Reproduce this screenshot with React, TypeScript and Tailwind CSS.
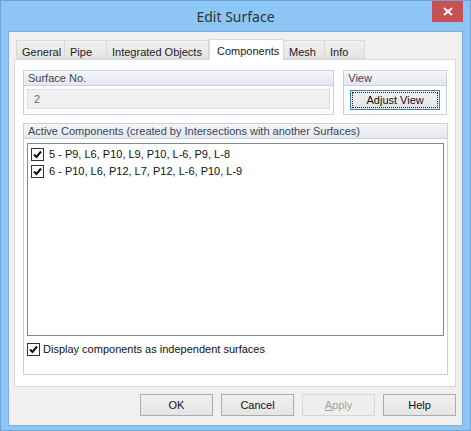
import React from 'react';

const tabs = ['General', 'Pipe', 'Integrated Objects', 'Components', 'Mesh', 'Info'];
const tabWidths = ['w-[49px]', 'w-[42px]', 'w-[102px]', 'w-[75px]', 'w-[41px]', 'w-[40px]'];

const items = [
  '5 - P9, L6, P10, L9, P10, L-6, P9, L-8',
  '6 - P10, L6, P12, L7, P12, L-6, P10, L-9',
];

const Check = () => (
  <div className="w-[13px] h-[13px] border border-[#333] bg-white flex items-center justify-center shrink-0">
    <svg width="9" height="9" viewBox="0 0 9 9">
      <path d="M1 4.5 L3.5 7 L8 1.5" stroke="#111" strokeWidth="2" fill="none" />
    </svg>
  </div>
);

const GroupHeader = ({ label }: { label: string }) => (
  <div className="h-[15px] bg-gradient-to-b from-[#f5f6f9] to-[#e4e7ee] border-b border-[#c9d1de] px-[4px] leading-[15px] text-[#3a4558]">
    {label}
  </div>
);

const Btn = ({ label, disabled }: { label: string; disabled?: boolean }) => (
  <div
    className={
      disabled
        ? 'w-[73px] h-[22px] border border-[#d6d6d6] bg-[#efefef] flex items-center justify-center text-[#a0a0a0]'
        : 'w-[73px] h-[22px] border border-[#acacac] bg-gradient-to-b from-[#f0f0f0] to-[#e5e5e5] flex items-center justify-center text-[#111]'
    }
  >
    {disabled ? (
      <span>
        <span className="underline">A</span>pply
      </span>
    ) : (
      label
    )}
  </div>
);

export default function App() {
  return (
    <div
      className="w-[471px] h-[431px] bg-[#8bc6f6] border border-[#6fa3d6] flex flex-col relative text-[11px] text-[#1a1a1a]"
      style={{ fontFamily: '"Liberation Sans", Arial, sans-serif' }}
    >
      <div
        className="h-[30px] flex items-center justify-center text-[14px] text-[#333] pt-[1px]"
        style={{ fontFamily: '"Noto Sans", "Open Sans", sans-serif' }}
      >
        Edit Surface
      </div>
      <div className="absolute top-0 right-[7px] w-[31px] h-[21px] bg-[#c75050] flex items-center justify-center">
        <svg width="10" height="9" viewBox="0 0 10 9">
          <path d="M1 1 L9 8 M9 1 L1 8" stroke="#fff" strokeWidth="2" />
        </svg>
      </div>

      <div className="mx-[7px] h-[395px] bg-[#f0f0f0] border border-[#83aed8] flex flex-col pl-[5px] pr-[6px] pt-[6px]">
        {/* tabs */}
        <div className="flex items-end h-[21px] ml-[2px]">
          {tabs.map((t, i) =>
            t === 'Components' ? (
              <div
                key={t}
                className={`${tabWidths[i]} h-[21px] bg-white border border-[#d9d9d9] border-b-0 -mb-px relative z-10 px-[7px] pt-[3px] whitespace-nowrap`}
              >
                {t}
              </div>
            ) : (
              <div
                key={t}
                className={`${tabWidths[i]} h-[19px] bg-gradient-to-b from-[#f0f0f0] to-[#e5e5e5] border border-[#d9d9d9] border-l-0 first:border-l px-[5px] pt-[3px] whitespace-nowrap`}
              >
                {t}
              </div>
            )
          )}
        </div>

        {/* panel */}
        <div className="h-[328px] bg-white border border-[#d9d9d9] flex flex-col px-[8px] pt-[10px] gap-[8px]">
          <div className="flex gap-[9px]">
            <div className="w-[312px] h-[45px] border border-[#c9d1de] flex flex-col">
              <GroupHeader label="Surface No." />
              <div className="mx-[3px] mt-[3px] h-[20px] bg-[#f0f0f0] border border-[#dcdcdc] px-[6px] leading-[18px] text-[#6d6d6d]">
                2
              </div>
            </div>
            <div className="w-[104px] h-[45px] border border-[#c9d1de] flex flex-col">
              <GroupHeader label="View" />
              <div className="mx-[6px] mt-[4px] h-[20px] border border-[#3c7fb1] bg-gradient-to-b from-[#f2f2f2] to-[#e3e3e3] p-[1px]">
                <div className="h-full border border-dotted border-[#222] flex items-center justify-center text-[#111]">
                  Adjust View
                </div>
              </div>
            </div>
          </div>

          <div className="w-[425px] h-[252px] border border-[#c9d1de] flex flex-col">
            <GroupHeader label="Active Components (created by Intersections with another Surfaces)" />
            <div className="mx-[3px] mt-[4px] h-[193px] border border-[#828790] bg-white flex flex-col pt-[4px] pl-[3px] gap-[4px]">
              {items.map((it) => (
                <div key={it} className="flex items-center gap-[5px] h-[13px]">
                  <Check />
                  <span className="text-[#111]">{it}</span>
                </div>
              ))}
            </div>
            <div className="flex items-center gap-[3px] mx-[3px] mt-[5px]">
              <Check />
              <span className="text-[#111]">Display components as independent surfaces</span>
            </div>
          </div>
        </div>

        {/* buttons */}
        <div className="flex justify-end gap-[8px] mt-[7px]">
          <Btn label="OK" />
          <Btn label="Cancel" />
          <Btn label="Apply" disabled />
          <Btn label="Help" />
        </div>
      </div>
    </div>
  );
}
